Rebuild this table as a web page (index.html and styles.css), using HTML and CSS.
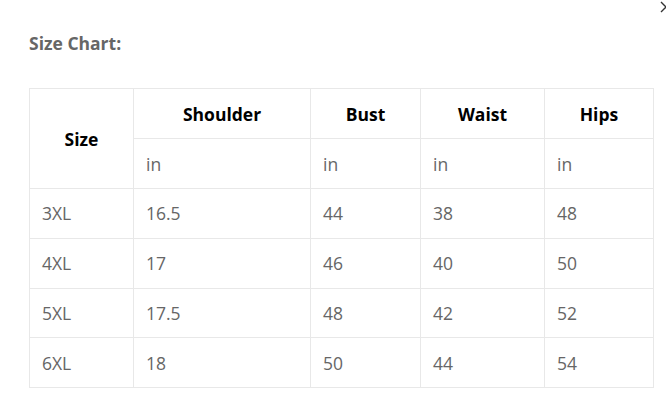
FILE: index.html
```html
<!DOCTYPE html>
<html lang="en">
<head>
<meta charset="utf-8">
<title>Size Chart</title>
<link rel="stylesheet" href="styles.css">
</head>
<body>
<div class="modal">
  <button class="close" aria-label="Close">
    <svg width="12" height="12" viewBox="0 0 12 12"><path d="M1 1 L11 11 M11 1 L1 11" stroke="#333" stroke-width="1.4" fill="none"/></svg>
  </button>
  <h2 class="title">Size Chart:</h2>
  <table class="chart">
    <colgroup>
      <col class="c-size"><col class="c-shoulder"><col class="c-bust"><col class="c-waist"><col class="c-hips">
    </colgroup>
    <thead>
      <tr><th rowspan="2">Size</th><th>Shoulder</th><th>Bust</th><th>Waist</th><th>Hips</th></tr>
      <tr class="units"><td>in</td><td>in</td><td>in</td><td>in</td></tr>
    </thead>
    <tbody>
      <tr><td>3XL</td><td>16.5</td><td>44</td><td>38</td><td>48</td></tr>
      <tr><td>4XL</td><td>17</td><td>46</td><td>40</td><td>50</td></tr>
      <tr><td>5XL</td><td>17.5</td><td>48</td><td>42</td><td>52</td></tr>
      <tr><td>6XL</td><td>18</td><td>50</td><td>44</td><td>54</td></tr>
    </tbody>
  </table>
</div>
</body>
</html>
```
FILE: styles.css
```css
html, body {
  margin: 0;
  padding: 0;
  background: #fff;
}
body {
  font-family: "Open Sans", "Noto Sans", sans-serif;
  width: 666px;
  height: 417px;
  overflow: hidden;
}
.modal {
  position: relative;
  padding: 31px 0 0 29px;
}
.close {
  position: absolute;
  top: 1px;
  left: 660px;
  padding: 0;
  margin: 0;
  border: 0;
  background: none;
  width: 12px;
  height: 12px;
  line-height: 0;
}
.title {
  margin: 0 0 33px 0;
  font-size: 17.5px;
  line-height: 24px;
  font-weight: 700;
  color: #666;
}
.chart {
  border-collapse: collapse;
  table-layout: fixed;
  width: 624px;
}
.c-size { width: 104px; }
.c-shoulder { width: 177px; }
.c-bust { width: 110px; }
.c-waist { width: 124px; }
.c-hips { width: 109px; }
.chart th,
.chart td {
  border: 1px solid #e8e8e8;
  height: 50px;
  padding: 0 12px;
  box-sizing: border-box;
  font-size: 17.5px;
  line-height: 24px;
  vertical-align: middle;
}
.chart tbody td {
  height: 49.75px;
}
.chart th {
  font-weight: 700;
  color: #000;
  text-align: center;
}
.chart td {
  color: #666;
  text-align: left;
}
```
